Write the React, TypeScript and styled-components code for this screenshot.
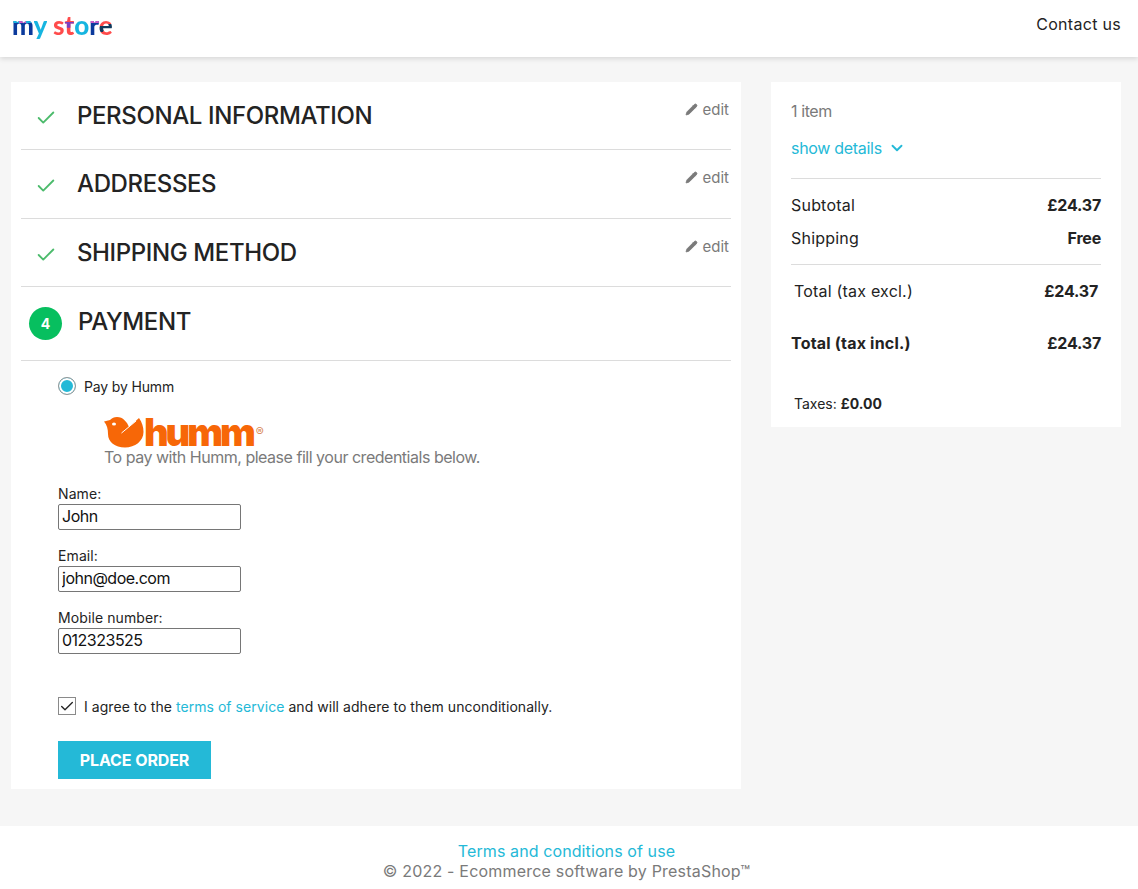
import { Pencil, Check, ChevronDown } from "lucide-react";
import styled, { createGlobalStyle } from "styled-components";

const GlobalStyle = createGlobalStyle`
  body {
    margin: 0;
    background: #f6f6f6;
    color: #232323;
    font-family: Inter, "Liberation Sans", sans-serif;
  }
`;

const steps = ["PERSONAL INFORMATION", "ADDRESSES", "SHIPPING METHOD"];

const BLUE = "#0b3a9c";
const CYAN = "#16b5e0";
const RED = "#ff4b4b";

// each letter of the logo is painted through background-clip: text
const logoLetters = [
  ["m", `linear-gradient(90deg, ${CYAN} 30%, #d05bc8 30% 65%, ${CYAN} 65%) 0 0 / 100% 45% no-repeat, ${BLUE}`],
  ["y", CYAN],
  [" ", "transparent"],
  ["s", RED],
  ["t", `linear-gradient(#7a3fc0, #7a3fc0) 0 50% / 100% 18% no-repeat, ${RED}`],
  ["o", CYAN],
  ["r", `linear-gradient(#d05bc8, #d05bc8) 0 30% / 100% 22% no-repeat, ${BLUE}`],
  ["e", `linear-gradient(165deg, ${RED} 50%, #123a5c 50% 66%, ${RED} 66%)`],
];

function HummBird() {
  return (
    <svg width="40" height="31" viewBox="0 0 40 31">
      <path
        d="M0 4.5 L6 3 C8 1 10 0 13 0 C19 0 23 5 25 10 L35 1 C38 5 39.5 10 39.5 15 C39.5 24 31 30.5 21 30.5 C11 30.5 4 25 4 17 C4 12 3 8 0 4.5 Z"
        fill="#f76707"
      />
      <path d="M17.5 16 L32 4" stroke="#fff" strokeWidth="1" fill="none" />
      <ellipse cx="10" cy="7" rx="2" ry="1.5" fill="#fff" />
    </svg>
  );
}

function App() {
  return (
    <>
      <GlobalStyle />
      <Header>
        <Logo>
          {logoLetters.map(([letter, paint], i) => (
            <LogoLetter key={i} $paint={paint}>
              {letter}
            </LogoLetter>
          ))}
        </Logo>
        <ContactLink>Contact us</ContactLink>
      </Header>
      <Main>
        <Steps>
          {steps.map((step) => (
            <StepRow key={step}>
              <StepCheck>
                <Check size={22} strokeWidth={2} />
              </StepCheck>
              <StepTitle>{step}</StepTitle>
              <EditLink>
                <Pencil size={13} fill="#7a7a7a" strokeWidth={1.5} />
                edit
              </EditLink>
            </StepRow>
          ))}
          <PaymentRow>
            <StepBadge>4</StepBadge>
            <PaymentTitle>PAYMENT</PaymentTitle>
          </PaymentRow>
          <PaymentBody>
            <RadioRow>
              <Radio />
              Pay by Humm
            </RadioRow>
            <HummBlock>
              <HummLogo>
                <HummBird />
                <HummWord>humm</HummWord>
                <HummMark>®</HummMark>
              </HummLogo>
              <HummText>To pay with Humm, please fill your credentials below.</HummText>
            </HummBlock>
            <Fields>
              <Field>
                <FieldLabel>Name:</FieldLabel>
                <FieldInput defaultValue="John" />
              </Field>
              <Field>
                <FieldLabel>Email:</FieldLabel>
                <FieldInput defaultValue="john@doe.com" />
              </Field>
              <Field>
                <FieldLabel>Mobile number:</FieldLabel>
                <FieldInput defaultValue="012323525" />
              </Field>
            </Fields>
            <TermsRow>
              <CheckBox>
                <Check size={17} strokeWidth={2} />
              </CheckBox>
              <span>
                I agree to the <TextLink>terms of service</TextLink> and will adhere to them
                unconditionally.
              </span>
            </TermsRow>
            <PlaceOrder>PLACE ORDER</PlaceOrder>
          </PaymentBody>
        </Steps>
        <Summary>
          <ItemCount>1 item</ItemCount>
          <ShowDetails>
            show details
            <ChevronDown size={18} strokeWidth={2.5} />
          </ShowDetails>
          <SummaryLines>
            <Line>
              <span>Subtotal</span>
              <strong>£24.37</strong>
            </Line>
            <Line>
              <span>Shipping</span>
              <strong>Free</strong>
            </Line>
          </SummaryLines>
          <TotalExcl>
            <span>Total (tax excl.)</span>
            <strong>£24.37</strong>
          </TotalExcl>
          <TotalIncl>
            <span>Total (tax incl.)</span>
            <strong>£24.37</strong>
          </TotalIncl>
          <Taxes>
            Taxes: <strong>£0.00</strong>
          </Taxes>
        </Summary>
      </Main>
      <Footer>
        <FooterLink>Terms and conditions of use</FooterLink>
        <Copyright>© 2022 - Ecommerce software by PrestaShop™</Copyright>
      </Footer>
    </>
  );
}

export default App;

const Header = styled.header`
  height: 57px;
  background: #fff;
  box-shadow: 0 2px 5px rgba(0, 0, 0, 0.12);
  display: flex;
  align-items: center;
  justify-content: space-between;
  padding: 0 17px 0 12px;
`;

const Logo = styled.div`
  font-family: Lato, sans-serif;
  font-size: 26px;
  font-weight: 900;
  letter-spacing: 0;
  line-height: 1.2;
  white-space: pre;
  margin-top: -6px;
`;

const LogoLetter = styled.span<{ $paint: string }>`
  background: ${(p) => p.$paint};
  -webkit-background-clip: text;
  background-clip: text;
  -webkit-text-fill-color: transparent;
`;

const ContactLink = styled.a`
  font-size: 16px;
  letter-spacing: 0.3px;
  color: #232323;
  margin-top: -9px;
`;

const Main = styled.main`
  display: flex;
  align-items: flex-start;
  gap: 30px;
  padding: 25px 17px 37px 11px;
`;

const Steps = styled.section`
  width: 730px;
  box-sizing: border-box;
  background: #fff;
  padding: 0 10px;
`;

const StepRow = styled.div`
  height: 68px;
  box-sizing: border-box;
  border-bottom: 1px solid #dcdcdc;
  display: flex;
  align-items: center;
  position: relative;
  padding-left: 14px;
  &:nth-child(2) {
    height: 69px;
    padding-bottom: 1px;
  }
`;

const PaymentRow = styled.div`
  height: 74px;
  box-sizing: border-box;
  border-bottom: 1px solid #dcdcdc;
  display: flex;
  align-items: center;
  padding-left: 8px;
  gap: 16px;
`;

const StepCheck = styled.span`
  width: 42px;
  display: flex;
  color: #4cbb6c;
  margin-top: 4px;
`;

const StepBadge = styled.span`
  width: 33px;
  height: 33px;
  border-radius: 50%;
  background: #07bf5f;
  color: #fff;
  font-size: 14px;
  font-weight: 700;
  display: flex;
  align-items: center;
  justify-content: center;
`;

const StepTitle = styled.h2`
  margin: 0;
  font-size: 24px;
  font-weight: 500;
  letter-spacing: -0.38px;
  color: #232323;
`;

const PaymentTitle = styled(StepTitle)`
  margin-top: -4px;
`;

const EditLink = styled.a`
  position: absolute;
  top: 18px;
  right: 2px;
  display: flex;
  align-items: center;
  gap: 5px;
  font-size: 15px;
  color: #7a7a7a;
`;

const PaymentBody = styled.div`
  padding: 16px 0 10px 37px;
`;

const RadioRow = styled.label`
  display: flex;
  align-items: center;
  gap: 8px;
  font-size: 14px;
  letter-spacing: -0.15px;
  color: #232323;
`;

const Radio = styled.span`
  width: 18px;
  height: 18px;
  box-sizing: border-box;
  border-radius: 50%;
  border: 1px solid #979797;
  background: #24b9d7;
  box-shadow: inset 0 0 0 2px #fff;
`;

const HummBlock = styled.div`
  margin: 22px 0 0 46px;
`;

const HummLogo = styled.div`
  display: flex;
  align-items: flex-start;
  height: 31px;
`;

const HummWord = styled.span`
  font-family: Inter, sans-serif;
  font-size: 38px;
  line-height: 31px;
  font-weight: 900;
  letter-spacing: -3.1px;
  color: #f76707;
`;

const HummMark = styled.span`
  font-size: 12px;
  line-height: 30px;
  color: #d98a5a;
  margin-left: 3px;
`;

const HummText = styled.div`
  font-size: 16px;
  letter-spacing: -0.48px;
  line-height: 20px;
  color: #7a7a7a;
  margin-top: -1px;
`;

const Fields = styled.div`
  display: flex;
  flex-direction: column;
  gap: 18px;
  margin-top: 19px;
`;

const Field = styled.div``;

const FieldLabel = styled.label`
  display: block;
  font-size: 14px;
  line-height: 18px;
  letter-spacing: 0.1px;
  color: #232323;
  position: relative;
  top: -1px;
`;

const FieldInput = styled.input`
  display: block;
  box-sizing: border-box;
  width: 183px;
  height: 26px;
  padding: 0 3px 2px;
  border: 1px solid #767676;
  border-radius: 2px;
  font-family: inherit;
  font-size: 16px;
  letter-spacing: -0.5px;
  color: #111;
`;

const TermsRow = styled.div`
  display: flex;
  align-items: center;
  gap: 8px;
  margin-top: 43px;
  font-size: 14px;
  letter-spacing: 0.05px;
  color: #232323;
`;

const CheckBox = styled.span`
  width: 18px;
  height: 18px;
  box-sizing: border-box;
  border: 1px solid #8a8a8a;
  display: flex;
  align-items: center;
  justify-content: center;
  color: #232323;
`;

const TextLink = styled.a`
  color: #24b9d7;
`;

const PlaceOrder = styled.button`
  display: block;
  width: 153px;
  height: 38px;
  margin-top: 26px;
  border: 0;
  background: #24b9d7;
  color: #fff;
  font-family: inherit;
  font-size: 16px;
  font-weight: 700;
  letter-spacing: -0.1px;
`;

const Summary = styled.aside`
  width: 350px;
  box-sizing: border-box;
  background: #fff;
  padding: 19px 20px 13px;
  font-size: 16px;
  color: #232323;
`;

const ItemCount = styled.div`
  line-height: 20px;
  color: #7a7a7a;
  letter-spacing: -0.4px;
`;

const ShowDetails = styled.a`
  display: flex;
  align-items: center;
  gap: 6px;
  margin-top: 17px;
  line-height: 20px;
  color: #24b9d7;
  letter-spacing: -0.3px;
`;

const SummaryLines = styled.div`
  margin-top: 20px;
  padding: 16px 0 16px;
  border-top: 1px solid #dcdcdc;
  border-bottom: 1px solid #dcdcdc;
  display: flex;
  flex-direction: column;
  gap: 13px;
`;

const Line = styled.div`
  display: flex;
  justify-content: space-between;
  line-height: 20px;
  letter-spacing: 0.2px;
  & strong {
    font-weight: 700;
    letter-spacing: -0.2px;
  }
`;

const TotalExcl = styled(Line)`
  padding: 16px 3px 0;
`;

const TotalIncl = styled(Line)`
  margin-top: 32px;
  font-weight: 700;
`;

const Taxes = styled.div`
  margin-top: 41px;
  padding-left: 3px;
  font-size: 14px;
  line-height: 20px;
`;

const Footer = styled.footer`
  background: #fff;
  height: 63px;
  box-sizing: border-box;
  padding: 15px 5px 0 0;
  display: flex;
  flex-direction: column;
  align-items: center;
  font-size: 16px;
  line-height: 20px;
`;

const FooterLink = styled(TextLink)`
  letter-spacing: 0.1px;
`;

const Copyright = styled.div`
  color: #7a7a7a;
  letter-spacing: 0.2px;
`;
